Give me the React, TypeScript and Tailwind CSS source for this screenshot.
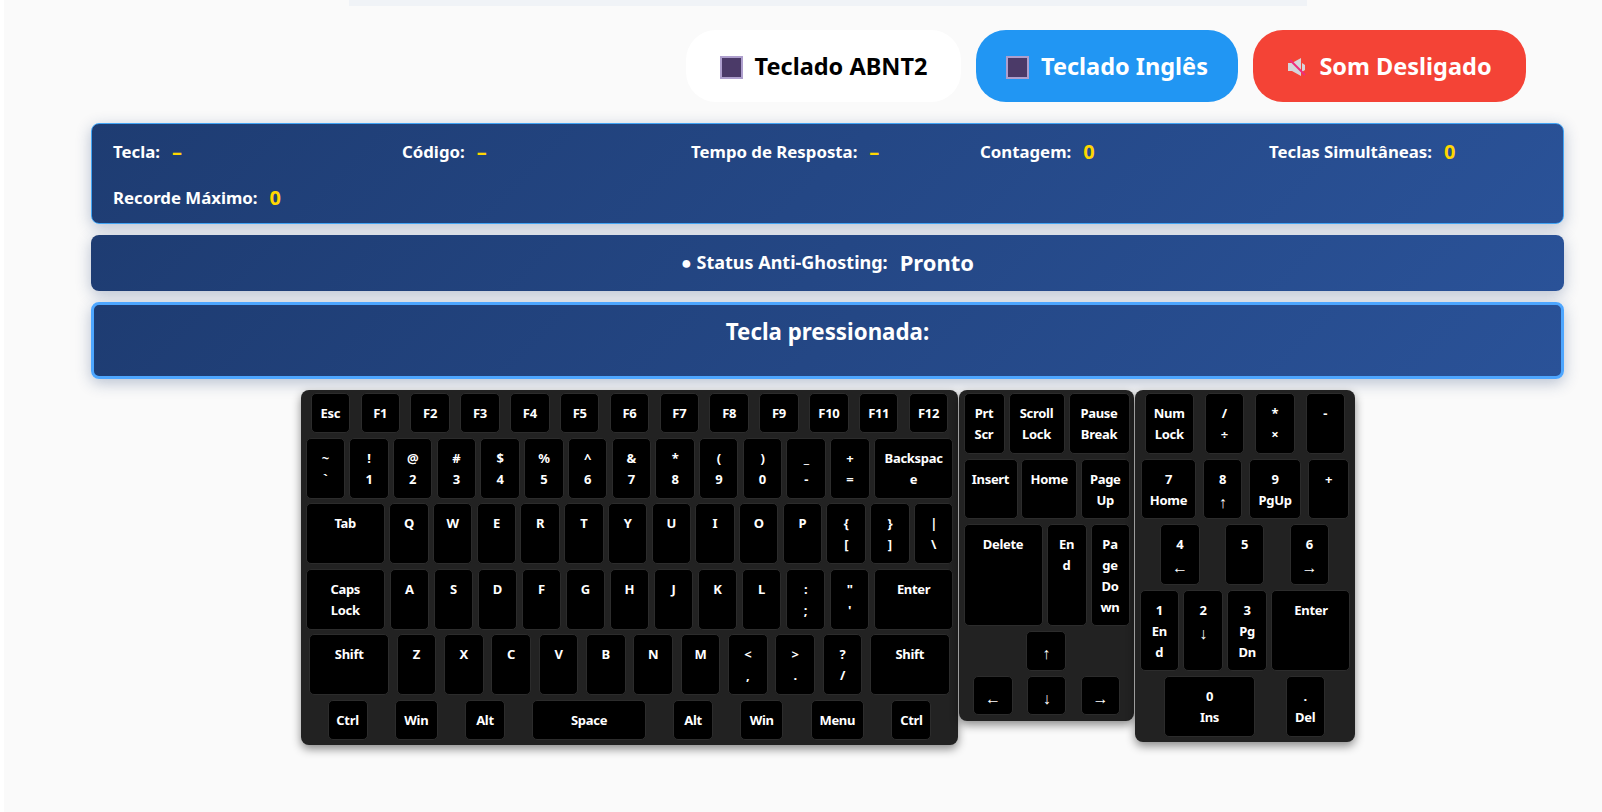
const K = 'w-[39.5px]';
const WIDE = 'w-[79.5px]';

type KeyDef = [string[], string?];

function Key({ lines, width = K }: { lines: string[]; width?: string }) {
  return (
    <div className={`${width} h-full shrink-0 rounded-[5px] border border-[#2c2c2c] bg-black pt-[9px] text-center text-[13px] font-bold leading-[21px] tracking-[-0.3px] text-white`}>
      {lines.map((l, i) => (
        <div key={i} className={/[←↑→↓]/.test(l) ? 'text-base' : ''}>{l}</div>
      ))}
    </div>
  );
}

function Row({ keys, className }: { keys: KeyDef[]; className: string }) {
  return (
    <div className={`flex ${className}`}>
      {keys.map(([lines, width], i) => (
        <Key key={i} lines={lines} width={width} />
      ))}
    </div>
  );
}

const one = (s: string): KeyDef => [[s]];
const two = (a: string, b: string): KeyDef => [[a, b]];

const fnRow: KeyDef[] = ['Esc', 'F1', 'F2', 'F3', 'F4', 'F5', 'F6', 'F7', 'F8', 'F9', 'F10', 'F11', 'F12'].map(one);
const numberRow: KeyDef[] = [
  two('~', '`'), two('!', '1'), two('@', '2'), two('#', '3'), two('$', '4'), two('%', '5'), two('^', '6'),
  two('&', '7'), two('*', '8'), two('(', '9'), two(')', '0'), two('_', '-'), two('+', '='),
  [['Backspac', 'e'], WIDE],
];
const tabRow: KeyDef[] = [
  [['Tab'], WIDE],
  ...['Q', 'W', 'E', 'R', 'T', 'Y', 'U', 'I', 'O', 'P'].map(one),
  two('{', '['), two('}', ']'), two('|', '\\'),
];
const capsRow: KeyDef[] = [
  [['Caps', 'Lock'], WIDE],
  ...['A', 'S', 'D', 'F', 'G', 'H', 'J', 'K', 'L'].map(one),
  two(':', ';'), two('"', "'"),
  [['Enter'], WIDE],
];
const shiftRow: KeyDef[] = [
  [['Shift'], WIDE],
  ...['Z', 'X', 'C', 'V', 'B', 'N', 'M'].map(one),
  two('<', ','), two('>', '.'), two('?', '/'),
  [['Shift'], WIDE],
];
const bottomRow: KeyDef[] = [
  [['Ctrl'], 'w-10'],
  [['Win'], 'w-[43px]'],
  [['Alt'], K],
  [['Space'], 'w-[114px]'],
  [['Alt'], K],
  [['Win'], 'w-[43px]'],
  [['Menu'], 'w-[53.5px]'],
  [['Ctrl'], 'w-10'],
];

function KeyIcon() {
  return <span className="h-[23px] w-[23px] shrink-0 border-[2.5px] border-[#ae9fcd] bg-[#4b3a68]" />;
}

function MutedIcon() {
  return (
    <svg width="20" height="18" viewBox="0 0 20 18" className="shrink-0">
      <path d="M1 5h4l9-5v18l-9-5H1z" fill="#d5d5da" />
      <path d="M15 5l3 2v5l-3 2z" fill="#d5d5da" />
      <path d="M3 2l15 15" stroke="#ef2b7c" strokeWidth="2" />
    </svg>
  );
}

function Stat({ label, value }: { label: string; value: string }) {
  return (
    <div className="flex h-[30px] items-center gap-3">
      <span className="text-[16.8px] font-bold text-white">{label}</span>
      <span className="text-[20px] font-bold text-[#ffd700]">{value}</span>
    </div>
  );
}

const panelBg = 'bg-[linear-gradient(135deg,#1e3c72,#2a5298)] shadow-[0_4px_15px_rgba(30,60,114,0.3)]';

export default function App() {
  return (
    <div className="min-h-[812px] bg-white pl-1 font-['Noto_Sans','Open_Sans',sans-serif]">
      <div className="min-h-[812px] bg-[#fafafa]">
        <div className="ml-[345px] h-1.5 w-[958px] bg-[#f0f3f7]" />

        <div className="mt-6 flex justify-end gap-[15px] pr-[76px]">
          <button className="flex h-[72px] w-[275px] items-center justify-center gap-3 rounded-[30px] bg-white pt-0.5 text-[23.5px] font-bold text-black">
            <KeyIcon />
            Teclado ABNT2
          </button>
          <button className="flex h-[72px] w-[262px] items-center justify-center gap-3 rounded-[30px] bg-[#2196f3] pt-0.5 text-[23.5px] font-bold text-white">
            <KeyIcon />
            Teclado Inglês
          </button>
          <button className="flex h-[72px] w-[273px] items-center justify-center gap-3 rounded-[30px] bg-[#f44336] pt-0.5 text-[23.5px] font-bold text-white">
            <MutedIcon />
            Som Desligado
          </button>
        </div>

        <div className="ml-[87px] mr-[38px] mt-[21px] flex flex-col gap-[11px]">
          <div className={`grid h-[101px] grid-cols-5 content-center gap-x-[15px] gap-y-4 rounded-lg border border-[#42a5f5] pl-[21px] pr-5 pt-0.5 ${panelBg}`}>
            <Stat label="Tecla:" value="–" />
            <Stat label="Código:" value="–" />
            <Stat label="Tempo de Resposta:" value="–" />
            <Stat label="Contagem:" value="0" />
            <Stat label="Teclas Simultâneas:" value="0" />
            <Stat label="Recorde Máximo:" value="0" />
          </div>

          <div className={`flex h-14 items-center justify-center gap-3 rounded-lg pb-0.5 ${panelBg}`}>
            <span className="text-[18px] font-bold text-white">● Status Anti-Ghosting:</span>
            <span className="text-[22px] font-bold text-white">Pronto</span>
          </div>

          <div className={`h-[77px] rounded-lg border-[3px] border-[#4da6ff] pt-2.5 text-center text-[22.3px] font-bold text-white ${panelBg}`}>
            Tecla pressionada:
          </div>
        </div>

        <div className="mt-[11px] flex items-start justify-center gap-px pl-[50px]">
          <div className="flex w-[657px] flex-col gap-[4.5px] rounded-lg bg-[#222] px-[4.5px] pb-[5.5px] pt-[3px] shadow-[0_4px_10px_rgba(0,0,0,0.45)]">
            <Row keys={fnRow} className="h-10 justify-around" />
            <Row keys={numberRow} className="h-[61px] justify-between" />
            <Row keys={tabRow} className="h-[61px] justify-between" />
            <Row keys={capsRow} className="h-[61px] justify-between" />
            <Row keys={shiftRow} className="h-[61px] justify-around" />
            <Row keys={bottomRow} className="h-10 justify-between px-[22px]" />
          </div>

          <div className="flex w-[175px] flex-col gap-[5px] rounded-lg bg-[#222] px-[4.5px] pb-[6px] pt-[3px] shadow-[0_4px_10px_rgba(0,0,0,0.45)]">
            <Row
              className="h-[60.5px] justify-between"
              keys={[[['Prt', 'Scr'], 'w-[41px]'], [['Scroll', 'Lock'], 'w-14'], [['Pause', 'Break'], 'w-[61px]']]}
            />
            <Row
              className="h-[60.5px] justify-between"
              keys={[[['Insert'], 'w-[54px]'], [['Home'], 'w-14'], [['Page', 'Up'], 'w-[48.5px]']]}
            />
            <Row
              className="h-[102px] justify-between"
              keys={[[['Delete'], 'w-[79px]'], [['En', 'd'], 'w-10'], [['Pa', 'ge', 'Do', 'wn'], 'w-[39px]']]}
            />
            <Row className="h-[39.5px] justify-center pr-px" keys={[one('↑')]} />
            <Row className="h-[39.5px] justify-between px-[9.5px]" keys={[one('←'), one('↓'), one('→')]} />
          </div>

          <div className="flex w-[220px] flex-col gap-[5px] rounded-lg bg-[#222] px-[4.5px] pb-[5.5px] pt-[3px] shadow-[0_4px_10px_rgba(0,0,0,0.45)]">
            <Row
              className="h-[60.5px] justify-around"
              keys={[[['Num', 'Lock'], 'w-[48.5px]'], two('/', '÷'), two('*', '×'), one('-')]}
            />
            <Row
              className="h-[60.5px] justify-between px-[1.5px]"
              keys={[[['7', 'Home'], 'w-[55px]'], two('8', '↑'), [['9', 'PgUp'], 'w-[52px]'], [['+'], 'w-[41px]']]}
            />
            <Row className="h-[61px] justify-between pl-[20.5px] pr-[21.5px]" keys={[two('4', '←'), one('5'), two('6', '→')]} />
            <Row
              className="h-[81px] justify-between"
              keys={[[['1', 'En', 'd']], two('2', '↓'), [['3', 'Pg', 'Dn'], 'w-10'], [['Enter'], 'w-[79px]']]}
            />
            <Row
              className="h-[60.5px] justify-between pl-[24.5px] pr-[25.5px]"
              keys={[[['0', 'Ins'], 'w-[91px]'], two('.', 'Del')]}
            />
          </div>
        </div>
      </div>
    </div>
  );
}
